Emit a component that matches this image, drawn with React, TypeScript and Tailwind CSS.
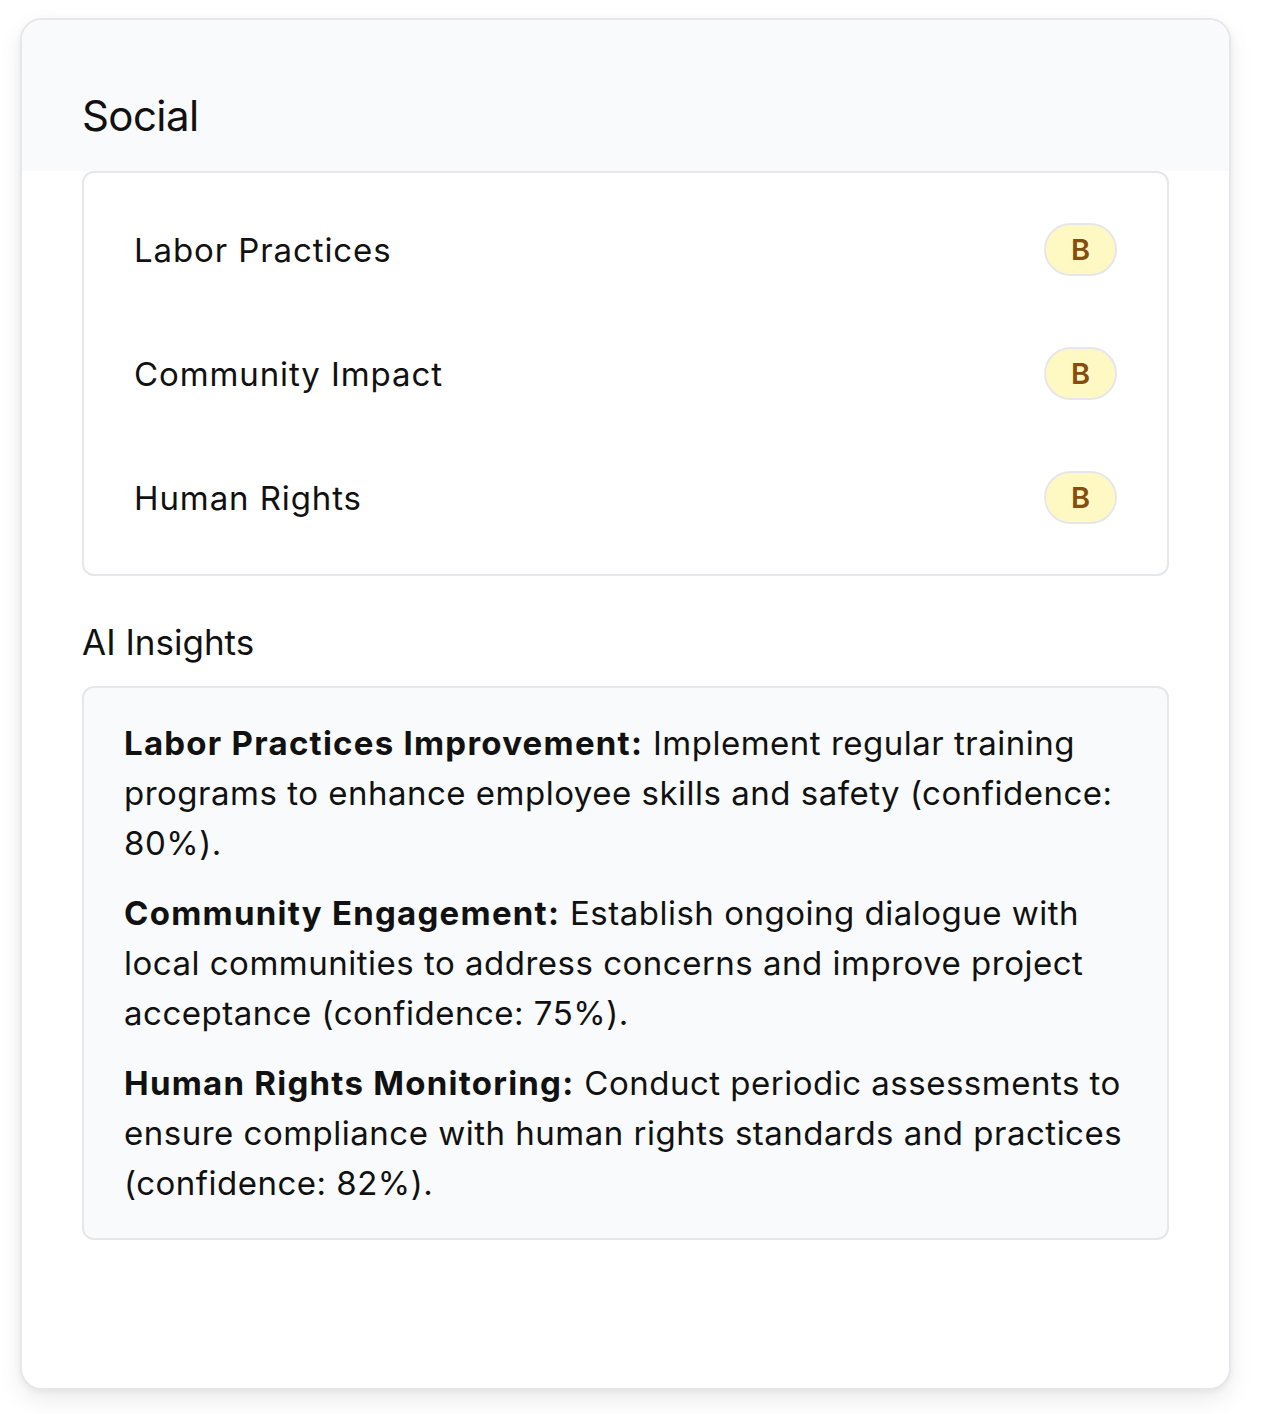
import React from 'react'

const categories = ['Labor Practices', 'Community Impact', 'Human Rights']

const insights = [
  {
    title: 'Labor Practices Improvement:',
    text: 'Implement regular training programs to enhance employee skills and safety (confidence: 80%).',
  },
  {
    title: 'Community Engagement:',
    text: 'Establish ongoing dialogue with local communities to address concerns and improve project acceptance (confidence: 75%).',
  },
  {
    title: 'Human Rights Monitoring:',
    text: 'Conduct periodic assessments to ensure compliance with human rights standards and practices (confidence: 82%).',
  },
]

function GradeBadge({ grade }: { grade: string }) {
  return (
    <span className="flex h-[53px] w-[73px] items-center justify-center rounded-full border-2 border-gray-200 bg-[#fef9c3] text-[29px] font-semibold text-[#854d0e]">
      {grade}
    </span>
  )
}

export default function App() {
  return (
    <div className="min-h-[1414px] bg-white pl-[20px] pt-[18px] font-['Inter',sans-serif] text-[#111]">
      <div className="flex h-[1372px] w-[1211px] flex-col overflow-hidden rounded-[22px] border-2 border-gray-200 bg-white shadow-[0_10px_24px_rgba(0,0,0,0.08),0_2px_6px_rgba(0,0,0,0.05)]">
        <div className="h-[151px] bg-[#f9fafb] px-[60px] pt-[69px]">
          <h2 className="text-[42px] leading-[54px] font-normal tracking-[-0.6px]">Social</h2>
        </div>
        <div className="px-[60px]">
          <div className="flex flex-col gap-[71px] rounded-[12px] border-2 border-gray-200 p-[50px]">
            {categories.map((c) => (
              <div key={c} className="flex items-center justify-between">
                <span className="text-[33px] leading-[50px] tracking-[0.9px]">{c}</span>
                <GradeBadge grade="B" />
              </div>
            ))}
          </div>

          <h3 className="mt-[44px] text-[35px] leading-[44px]">AI Insights</h3>

          <div className="mt-[22px] flex flex-col gap-[20px] rounded-[12px] border-2 border-gray-200 bg-[#f8fafc] px-[40px] pt-[30px] pb-[30px]">
            {insights.map((i) => (
              <p key={i.title} className="text-[33px] leading-[50px] tracking-[0.5px]">
                <strong className="font-bold tracking-[1.25px]">{i.title}</strong> {i.text}
              </p>
            ))}
          </div>
        </div>
      </div>
    </div>
  )
}
